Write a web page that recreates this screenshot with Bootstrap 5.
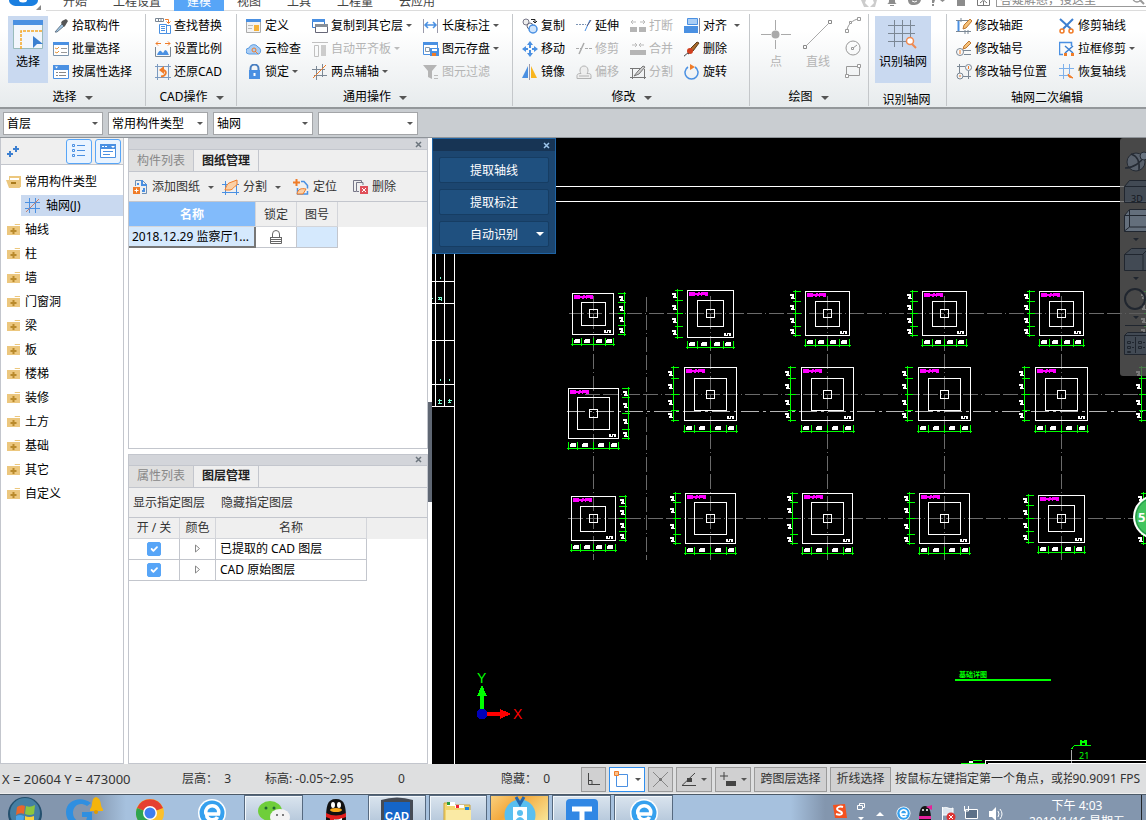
<!DOCTYPE html>
<html lang="zh-CN">
<head>
<meta charset="utf-8">
<meta name="viewport" content="width=device-width, initial-scale=1">
<title>CAD 识别轴网</title>
<link href="https://cdn.jsdelivr.net/npm/bootstrap@5.3.0/dist/css/bootstrap.min.css" rel="stylesheet">
<style>
  :root { --line: #c3c6cd; --blue: #4a90e2; --panel: #efefef; }
  body { font: 12px/16px "Noto Sans", "Noto Sans CJK SC", sans-serif; color: #000; background: #fff; height: 100vh; overflow: hidden; }
  button { font: inherit; color: inherit; background: none; border: 0; padding: 0; white-space: nowrap; }
  a { color: inherit; text-decoration: none; white-space: nowrap; }
  svg { display: block; flex: none; overflow: hidden; }
  label { white-space: nowrap; }

  /* title strip */
  .topstrip { height: 11px; overflow: hidden; background: #fff; }
  .topstrip .edge { border-bottom: 1px solid #dcdcdc; }
  .tab-link { height: 19px; line-height: 20px; padding: 0 13px; color: #444; border-bottom: 1px solid #dcdcdc; }
  .tab-link.on { background: #57a5f7; color: #fff; border-color: #57a5f7; }
  .finder { width: 150px; height: 16px; margin-bottom: 3px; border: 1px solid #999; border-right: 0; font-size: 12px; padding: 0 3px; color: #777; line-height: 12px; }
  .finder::placeholder { color: #888; opacity: 1; }

  /* ribbon */
  .ribbon { height: 98px; background: linear-gradient(#fff 20%, #e7ebed); border-bottom: 2px solid #93979a; }
  .grp { height: 92px; margin-top: 3px; border-right: 1px solid #c4c7ca; padding-left: 9px; flex: none; }
  .grp.w1 { width: 146px; padding-left: 8px; } .grp.w2 { width: 91px; } .grp.w3 { width: 276px; }
  .grp.w4 { width: 237px; } .grp.w5 { width: 119px; padding-left: 7px; } .grp.w6 { width: 78px; padding-left: 6px; }
  .grp-name { height: 22px; line-height: 25px; margin-left: -8px; text-align: center; }
  .grp-name.low { line-height: 27px; }
  .grp-name .caret { border-width: 4px 4px 0; }
  .grp-body { height: 70px; }
  .tool { height: 23px; display: flex; align-items: center; gap: 3px; }
  .tool.off, .off { color: #b4b4b4; }
  .big { height: 67px; margin-top: 2px; display: flex; flex-direction: column; align-items: center; }
  .big.on { background: #c9d9f0; }
  .caret { width: 0; height: 0; border: solid transparent; border-width: 3px 3px 0; border-top-color: #555; margin-left: 5px; display: inline-block; vertical-align: middle; }
  .off .caret { border-top-color: #bbb; }

  /* filter row */
  .filters { height: 29px; background: #c9cdd1; border-bottom: 1px solid #8f9499; padding: 0 3px; gap: 5px; }
  .pick { width: 100px; height: 23px; border: 1px solid #a3a5a8; border-radius: 0; font: inherit; padding: 1px 18px 0 3px; background-position: right 4px center; background-size: 6px 3px; color: #000;
    background-color: #fff; background-image: url("data:image/svg+xml,%3csvg xmlns='http://www.w3.org/2000/svg' viewBox='0 0 6 3'%3e%3cpath d='M0 0h6L3 3z' fill='%23555'/%3e%3c/svg%3e"); }

  /* navigation tree */
  .navtree { width: 124px; border: 1px solid var(--line); border-top: 0; }
  .navtree-head { height: 27px; background: var(--panel); border-bottom: 1px solid var(--line); padding: 0 2px 0 6px; gap: 3px; }
  .tgl { width: 26px; height: 25px; border: 1px solid #57a5f7; border-radius: 3px; background: #eaf4ff; }
  .tree { padding: 5px 0 0; margin: 0; list-style: none; }
  .tree a { display: flex; align-items: center; height: 24px; gap: 4px; padding-left: 5px; }
  .tree a.sel { margin: 1px 0 2px 20px; height: 21px; gap: 6px; padding-left: 4px; background: #c9d9f0; }

  /* dock panels */
  .dock { width: 300px; margin: 0 4px; gap: 5px; }
  .pane { flex: 1 1 0; border: 1px solid var(--line); background: #fff; }
  .pane-top { height: 11px; background: #d3d5da; border-bottom: 1px solid var(--line); padding-right: 5px; }
  .pane-tabs { height: 22px; background: var(--panel); border-bottom: 1px solid var(--line); }
  .pane-tabs button { width: 65px; border-right: 1px solid var(--line); background: #dfdfdf; color: #888; }
  .pane-tabs .on { background: var(--panel); color: #222; font-weight: bold; }
  .pane-tools { height: 30px; background: var(--panel); border-bottom: 1px solid var(--line); padding: 1px 4px 0; color: #333; }
  .pane-tools button { display: flex; align-items: center; gap: 4px; }
  .sheet { table-layout: fixed; border-collapse: separate; border-spacing: 0; }
  .sheet th { font-weight: normal; text-align: center; color: #333; border: solid #d3d5da; border-width: 0 1px 1px 0; padding: 1px 0 0; }
  .sheet td { border: solid var(--line); border-width: 0 1px 1px 0; padding: 0 0 0 4px; height: 21px; line-height: 16px; white-space: nowrap; overflow: hidden; background: #fff; }
  .sheet td.file { background: #d5e9fd; border-right: 2px solid #777; border-bottom: 2px solid #777; padding-left: 3px; }
  .sheet td.pale { background: #d5e9fd; }
  .thead-bg { background: linear-gradient(var(--panel) 25px, #fff 25px); }
  .thead-bg.short { background: linear-gradient(var(--panel) 21px, #fff 21px); }
  .tickbox { width: 14px; height: 14px; margin: 0; display: block; border-radius: 2px !important; }
  .tickbox:checked { background-color: #57a5f7; border-color: #57a5f7; }
  .grip { width: 4px; height: 100px; left: -4px; top: 264px; background: #5f6773; }

  /* drawing area */
  .stage { background: #000; min-width: 0; }
  .float-box { width: 124px; height: 116px; left: 0; top: 0; background: #1c4670; border: 1px solid #1f63a3; }
  .float-top { height: 12px; background: #173454; padding-right: 5px; margin-bottom: 6px; }
  .float-box .act { display: block; position: relative; width: 110px; height: 26px; margin: 0 6px 6px; padding-top: 2px; background: #1f507f; border: 1px solid #163d63; border-radius: 2px; color: #fff; }

  /* status bar */
  .status { height: 30px; background: #dedfe0; color: #333; padding: 1px 6px 0 2px; border-bottom: 1px solid #eee; }
  .status .val { flex: none; white-space: pre; }
  .status .coords { width: 180px; font-size: 13px; }
  .sbtn { height: 25px; border: 1px solid #9a9a9a; background: #d0d0d1; display: flex; align-items: center; justify-content: center; flex: none; color: #333; }
  .sbtn.on { background: #fff; border-color: #2f8fef; }

  /* task bar */
  .taskbar { height: 26px; overflow: hidden; border-top: 1px solid #4c5a68; background: linear-gradient(90deg, #8396ae 8%, #a6c1de 11%, #a6c1de 69%, #8396ae 72%); }
  .task { height: 26px; width: 58px; display: flex; justify-content: center; flex: none; margin-right: 3px; border: 1px solid transparent; border-bottom: 0; }
  .task.wide { width: 59px; }
  .task.open { border-color: #56697f; background: linear-gradient(#dae4ee, #b7c9dc); box-shadow: inset 1px 1px #f2f7fb; }
  .task.alert-on { background: linear-gradient(135deg, #f9cf7c, #f3a83c 40%, #f7e79a); border-color: #56697f; }
  .clock { width: 96px; color: #fff; text-align: center; margin-top: 3px; }
</style>
</head>
<body class="d-flex flex-column">
<svg width="0" height="0" class="position-absolute" aria-hidden="true">
  <symbol id="folder" viewBox="0 0 15 14"><path d="M1 3h7l1-2h5v11H1z" fill="#ecc77e"/><path d="M8 2.500h6" stroke="#fff"/><path d="M7.500 5v6M4.500 8h6" stroke="#b98a2c" stroke-width="2"/></symbol>
  <symbol id="folder-open" viewBox="0 0 15 14"><path d="M3 1h12v11H3z" fill="#ecc77e"/><path d="M4 3h9v2H4z" fill="#fff"/><path d="M0 5h12l2 8H3z" fill="#ecc77e"/><path d="M5 8h5" stroke="#a97a1c" stroke-width="2"/></symbol>
  <symbol id="ie" viewBox="0 0 30 30"><circle cx="15" cy="15" r="14" fill="#fff"/><circle cx="15" cy="15" r="12.500" fill="#35a0ee"/><path d="M9 16a6.500 6.500 0 1 1 12.500 0H9.500c0 7 9 7 11 3" fill="none" stroke="#fff" stroke-width="3.500"/></symbol>
  <symbol id="cross" viewBox="0 0 7 7"><path d="M1 1l5 5M6 1L1 6" stroke="currentColor" stroke-width="1.500"/></symbol>
</svg>

<header class="topstrip d-flex align-items-end flex-shrink-0">
  <svg width="46" height="11"><path d="M9 0h29c0 4-4 6-8 6H17c-4 0-8-2-8-6z" fill="#1a7fe0"/><ellipse cx="23" cy="0" rx="4" ry="2.500" fill="#fff"/><path d="M41 5v5h-5z" fill="#888"/></svg>
  <span class="edge ps-1"></span>
  <nav class="d-flex">
    <a class="tab-link" href="#">开始</a><a class="tab-link" href="#">工程设置</a><a class="tab-link on" href="#">建模</a><a class="tab-link" href="#">视图</a><a class="tab-link" href="#">工具</a><a class="tab-link" href="#">工程量</a><a class="tab-link" href="#">云应用</a>
  </nav>
  <div class="edge d-flex flex-fill justify-content-end align-items-end">
    <svg width="135" height="10" fill="#8c8c8c"><path d="M0 0h5l-1 3 4 4H3zM16 0h-4l1 3-4 4h5z" fill="#ccc"/><path d="M25 4c3 0 3-2 3-4h6c0 2 0 4 3 4zM29 5h4v1h-4z"/><path d="M47 0h13c-1 4-4 5-8 5-3 0-5-2-5-5z"/><path d="M51 1q3 2 5 0" stroke="#fff" fill="none"/><path d="M71 4h2v2h-2zM71 0h3l-1 3h-2zM79 0h5l-2.500 2z"/><path d="M96 0h8v6h-8z"/><path d="M116.500 0v5.500h12V0M122.500 5V1M119 3l3.500-3L126 3" fill="none" stroke="#777"/></svg>
    <div class="position-relative"><input class="finder d-block" type="text" placeholder="答疑解惑，搜这里" aria-label="搜索"><svg class="position-absolute end-0 bottom-0 mb-1" width="14" height="8"><circle cx="5" cy="0" r="4" fill="none" stroke="#999" stroke-width="1.500"/><path d="M8 2l4 4" stroke="#999" stroke-width="2"/></svg></div>
  </div>
</header>

<section class="ribbon d-flex flex-shrink-0">
  <div class="grp w1">
    <div class="grp-body d-flex" style="gap:5px">
      <button class="big on" style="width:40px"><svg width="30" height="30" class="mt-1"><path d="M.5.5h29v28H.5z" fill="#f2f6fc" stroke="#9bb"/><path d="M0 0h30v5H0z" fill="#4a90e2"/><path d="M8 29V11h22" fill="none" stroke="#f5a623" stroke-width="1.500" stroke-dasharray="3 1"/><path d="M20 16v12l4-4h6z" fill="#3b7fd0"/></svg><span class="mt-1">选择</span></button>
      <div>
        <button class="tool"><svg width="16" height="16"><path d="M2 14l7-8 2 2-7 6z" fill="#9fc8e8" stroke="#678"/><path d="M8 5l3 4 1-1 3-5-2-2-4 2z" fill="#555"/></svg>拾取构件</button>
        <button class="tool"><svg width="16" height="16"><path d="M.5 1.500h15v13H.5z" fill="#fff" stroke="#7b94ad"/><path d="M0 1h16v3H0z" fill="#4a90e2"/><path d="M8 7.500h6M8 11.500h6" stroke="#999"/><path d="M2 7l2 1 2-2M2 11l2 1 2-2" fill="none" stroke="#e8963a"/></svg>批量选择</button>
        <button class="tool"><svg width="16" height="16"><path d="M.5 1.500h15v13H.5z" fill="#fff" stroke="#4a90e2"/><path d="M0 1h16v5H0z" fill="#4a90e2"/><path d="M2 2.500h3l-1.500 2z" fill="#fff"/><path d="M3 8.500h2M6 8.500h7M3 11.500h2M6 11.500h7" stroke="#888"/></svg>按属性选择</button>
      </div>
    </div>
    <div class="grp-name">选择 <span class="caret"></span></div>
  </div>

  <div class="grp w2">
    <div class="grp-body">
      <button class="tool"><svg width="16" height="16"><path d="M.5.500h8v3h-8zM3.500.500v3M6 .5v3" fill="none" stroke="#7b8794"/><path d="M10 1.500h3.500V5M11.500 3.500l2 2 2-2" fill="none" stroke="#f07c28"/><path d="M4.500 6.500h7v9h-7zM11.500 7.500h4v8h-4" fill="#fff" stroke="#4a90e2"/><path d="M6 8.500h4M6 10.500h4M6 12.500h4" stroke="#4a90e2"/></svg>查找替换</button>
      <button class="tool"><svg width="16" height="16"><path d="M.5 6v9.500h15V6" fill="none" stroke="#7b8794"/><path d="M2 14c1-3 3-5 4-4l2 2 2-3c2 0 3 3 4 5z" fill="#4a90e2"/><path d="M1 2.500h5M10 2.500h5M3 .5l-2 2 2 2M13 .5l2 2-2 2" fill="none" stroke="#f07c28"/></svg>设置比例</button>
      <button class="tool"><svg width="16" height="16"><path d="M2.500 0v16M13.500 0v16M0 2.500h16M0 13.500h16" stroke="#7b9ac0"/><path d="M6 12.500c6-1 6-6 2-6.500" fill="none" stroke="#f07c28" stroke-width="2"/><path d="M9 2v8L4 6z" fill="#f07c28"/></svg>还原CAD</button>
    </div>
    <div class="grp-name">CAD操作 <span class="caret"></span></div>
  </div>

  <div class="grp w3">
    <div class="grp-body d-flex">
      <div style="width:66px">
        <button class="tool"><svg width="16" height="16"><path d="M.5 1.500h14v13H.5z" fill="#f3f3f3" stroke="#aaa"/><path d="M0 1h15v3H0z" fill="#4a90e2"/><path d="M8 7h5v6H8z" fill="#f5b23a"/><path d="M2 7.500h5M2 10.500h4" stroke="#bbb"/></svg>定义</button>
        <button class="tool"><svg width="16" height="16"><path d="M3 13a3 3 0 0 1 0-6 5 5 0 0 1 9-1 4 4 0 0 1 1 7z" fill="#a9cdf5" stroke="#5b9be0"/><circle cx="8" cy="9" r="2" fill="none" stroke="#f07c28"/><path d="M9 10l3 3" stroke="#f07c28"/></svg>云检查</button>
        <button class="tool"><svg width="16" height="16"><path d="M4.500 7V4.500a4 4 0 0 1 8 0V7" fill="none" stroke="#4a7fc0" stroke-width="2"/><path d="M3 6h11v9H3z" fill="#4a90e2"/><path d="M8.500 9v3" stroke="#fff" stroke-width="2"/></svg>锁定 <span class="caret ms-0"></span></button>
      </div>
      <div style="width:111px">
        <button class="tool"><svg width="16" height="16"><path d="M.5 1.500h12v8H.5z" fill="#fff" stroke="#3c7fd0"/><path d="M0 1h13v3H0z" fill="#4a90e2"/><path d="M3.500 6.500h12v8h-12z" fill="#fff" stroke="#667"/><path d="M3 6h13v3H3z" fill="#888f98"/></svg>复制到其它层<span class="caret ms-0"></span></button>
        <button class="tool off"><svg width="16" height="16"><path d="M0 1.500h16M2.500 4.500h4v11h-4z" fill="none" stroke="#c0c0c0"/><path d="M9 4h5v11H9z" fill="#ccc"/></svg>自动平齐板<span class="caret ms-0"></span></button>
        <button class="tool"><svg width="16" height="16"><path d="M4.500 2v14M10.500 0v13M0 5.500h13M2 11.500h13" stroke="#7b8794"/><path d="M1 14L14 1" stroke="#f07c28"/></svg>两点辅轴<span class="caret ms-0"></span></button>
      </div>
      <div>
        <button class="tool"><svg width="16" height="16"><path d="M.5 1v14M14.500 1v14" stroke="#99a"/><path d="M2 7h11M5 4L2 7l3 3M10 4l3 3-3 3" fill="none" stroke="#4a90e2" stroke-width="1.500"/></svg>长度标注<span class="caret ms-0"></span></button>
        <button class="tool"><svg width="16" height="16"><path d="M.5 1.500h14v12H.5z" fill="#fff" stroke="#4a90e2"/><path d="M0 1h15v3H0z" fill="#4a90e2"/><path d="M2.500 6.500h4v4h-4z" fill="none" stroke="#89a"/><path d="M7 7h9v8H7z" fill="#4a90e2"/><path d="M9 8h5v2H9z" fill="#fff"/><path d="M9 12h4v3H9z" fill="#f07c28"/></svg>图元存盘<span class="caret ms-0"></span></button>
        <button class="tool off"><svg width="16" height="16"><path d="M0 1h14L9 7v8l-4-2V7z" fill="#b5b5b5"/><path d="M11 11.500h4M11 14.500h4" stroke="#bbb"/></svg>图元过滤</button>
      </div>
    </div>
    <div class="grp-name">通用操作 <span class="caret"></span></div>
  </div>

  <div class="grp w4">
    <div class="grp-body d-flex" style="gap:11px">
      <div>
        <button class="tool"><svg width="16" height="16"><circle cx="4" cy="4" r="3" fill="#eee" stroke="#778"/><circle cx="8" cy="8" r="3" fill="none" stroke="#667"/><circle cx="11" cy="11" r="4" fill="#cfe4fb" stroke="#4a90e2" stroke-width="1.500"/><path d="M9 1.500h4V4M11 3l2 2 2-2" fill="none" stroke="#222"/></svg>复制</button>
        <button class="tool"><svg width="16" height="16"><path d="M8 0l3 4H5zM8 16l3-4H5zM0 8l4-3v6zM16 8l-4-3v6zM7 4h2v3H7zM7 9h2v3H7zM4 7h2v2H4zM10 7h2v2h-2z" fill="#4a90e2"/></svg>移动</button>
        <button class="tool"><svg width="16" height="16"><path d="M6 2v12H0z" fill="#4a90e2"/><path d="M9 2v12h6z" fill="#f8b51e"/><path d="M7.500 0v16" stroke="#99a"/></svg>镜像</button>
      </div>
      <div>
        <button class="tool"><svg width="16" height="16"><path d="M0 6.500h10" stroke="#7d95b5" stroke-dasharray="2 1"/><path d="M9 13l5-11" stroke="#4a90e2"/><path d="M11 8l4-6" stroke="#557"/></svg>延伸</button>
        <button class="tool off"><svg width="16" height="16"><path d="M0 7.500h6M9 7.500h7" stroke="#aaa" stroke-dasharray="3 1"/><path d="M3 13L8 2" stroke="#aaa" stroke-width="1.500"/></svg>修剪</button>
        <button class="tool off"><svg width="16" height="16"><path d="M1 14.500v-3c0-2 3-2 4-2C3 7 4 2 8 2s5 5 3 7.500c2 0 4 0 4 2v3zM3 12h10" fill="#eee" stroke="#b2b2b2"/></svg>偏移</button>
      </div>
      <div>
        <button class="tool off"><svg width="16" height="16"><path d="M0 9h7v5H0zM9 9h7v5H9z" fill="#b5b5b5"/><path d="M1 4h5M3 2L1 4l2 2M10 4h5M13 2l2 2-2 2" fill="none" stroke="#bbb"/></svg>打断</button>
        <button class="tool off"><svg width="16" height="16"><path d="M0 9h8v5H0zM8 9h8v5H8z" fill="#b5b5b5"/><path d="M2 4h5M5 2l2 2-2 2M9 4h5M11 2L9 4l2 2" fill="none" stroke="#bbb"/></svg>合并</button>
        <button class="tool off"><svg width="16" height="16"><path d="M0 4.500h11M2.500 4v11M14.500 5v10M0 13.500h16" stroke="#777"/><path d="M4 12l4-5 5-5 2 1-6 7z" fill="#ccc" stroke="#777"/></svg>分割</button>
      </div>
      <div>
        <button class="tool"><svg width="16" height="16"><path d="M3.500.5h10v6h-10z" fill="#a9cdf5" stroke="#4a90e2"/><path d="M0 8h14v7H0z" fill="#4a90e2"/><path d="M15.500 0v16" stroke="#889"/></svg>对齐<span class="caret ms-1"></span></button>
        <button class="tool"><svg width="16" height="16"><path d="M6 8l7-7 2 1-6 8z" fill="#a86a2a" stroke="#5a3a1a"/><circle cx="6" cy="10" r="3" fill="#d04020"/><path d="M0 15c3-1 2-4 5-2" stroke="#333" fill="none"/></svg>删除</button>
        <button class="tool"><svg width="16" height="16"><path d="M11 3a6.500 6.500 0 1 1-7 0" fill="none" stroke="#4a90e2" stroke-width="1.500"/><path d="M6 0l5 3-5 3z" fill="#f07c28"/></svg>旋转</button>
      </div>
    </div>
    <div class="grp-name">修改 <span class="caret"></span></div>
  </div>

  <div class="grp w5">
    <div class="grp-body d-flex off" style="gap:12px">
      <button class="big ps-1"><svg width="30" height="30" class="mt-1"><path d="M0 14.500h10M20 14.500h10M14.500 0v10M14.500 20v9" stroke="#aaa"/><circle cx="14.500" cy="14.500" r="4" fill="#aaa"/></svg><span class="mt-1">点</span></button>
      <button class="big"><svg width="30" height="30" class="mt-1"><path d="M4 25L25 4" stroke="#aaa"/><path d="M.5 25.500h3v3h-3zM25.500.5h3v3h-3z" fill="none" stroke="#888"/></svg><span class="mt-1">直线</span></button>
      <div>
        <button class="tool" aria-label="圆弧"><svg width="17" height="17"><path d="M2 13C3 7 8 3 13 2" fill="none" stroke="#999"/><path d="M.5 12.500h3v3h-3zM12.500.5h3v3h-3zM4.500 4.500h2v2h-2z" fill="#fff" stroke="#999"/></svg></button>
        <button class="tool" aria-label="圆"><svg width="17" height="17"><circle cx="8" cy="8" r="7" fill="none" stroke="#999"/><path d="M8 8l4-3" stroke="#999"/><path d="M6.500 7.500h2v2h-2z" fill="#fff" stroke="#999"/></svg></button>
        <button class="tool" aria-label="矩形"><svg width="17" height="17"><path d="M1.500 3.500h13v9h-13z" fill="none" stroke="#999"/><path d="M.5 11.500h3v3h-3zM12.500 1.500h3v3h-3z" fill="#fff" stroke="#999"/></svg></button>
      </div>
    </div>
    <div class="grp-name">绘图 <span class="caret"></span></div>
  </div>

  <div class="grp w6">
    <div class="grp-body">
      <button class="big on" style="width:56px"><svg width="30" height="30" class="mt-1"><path d="M6.500 0v27M14.500 0v27M22.500 0v19M0 5.500h27M0 13.500h27M0 21.500h18" stroke="#7b8794"/><circle cx="22" cy="21" r="3.500" fill="#fff" stroke="#f08a50" stroke-width="1.500"/><path d="M24 24l4 4" stroke="#f08a50" stroke-width="2"/></svg><span class="mt-1">识别轴网</span></button>
    </div>
    <div class="grp-name low">识别轴网</div>
  </div>

  <div class="grp flex-fill border-0">
    <div class="grp-body d-flex" style="gap:12px">
      <div>
        <button class="tool"><svg width="16" height="16"><path d="M0 2.500h15M0 13.500h15M5 0v4M9 12v4M12 12v4" stroke="#7b8794"/><path d="M2.500 3v10" stroke="#4a90e2" stroke-width="2"/><path d="M7 11l1-4 6-6 2 2-6 7z" fill="#f6c27a" stroke="#c07830"/></svg>修改轴距</button>
        <button class="tool"><svg width="16" height="16"><circle cx="4" cy="11" r="3.500" fill="none" stroke="#7b8794"/><path d="M4 9v4" stroke="#f07c28"/><path d="M8 13.500h7M7 9.500h8" stroke="#7b8794"/><path d="M7 8l1-3 5-5 2 2-5 5z" fill="#f6c27a" stroke="#c07830"/></svg>修改轴号</button>
        <button class="tool"><svg width="16" height="16"><circle cx="4" cy="12" r="3" fill="none" stroke="#7b8794"/><circle cx="12.500" cy="3.500" r="3" fill="none" stroke="#7b8794"/><path d="M1 2.500h8M3.500 0v9M7 12.500h8M12.500 7v8" stroke="#7b8794"/><path d="M4 11v2M12.500 2v3" stroke="#f07c28"/></svg>修改轴号位置</button>
      </div>
      <div>
        <button class="tool"><svg width="16" height="16"><path d="M1 1l11 10M14 1L4 11" stroke="#3c7fd0" stroke-width="2"/><circle cx="3" cy="13" r="2" fill="none" stroke="#f07c28" stroke-width="1.500"/><circle cx="12" cy="13" r="2" fill="none" stroke="#f07c28" stroke-width="1.500"/></svg>修剪轴线</button>
        <button class="tool"><svg width="16" height="16"><path d="M4 13.500H.5V1.500h12V5" fill="none" stroke="#4a90e2" stroke-width="1.500"/><path d="M6 5l8 7M14 5l-8 7" stroke="#3c7fd0" stroke-width="1.500"/><path d="M5 12h3v3H5zM12 12h3v3h-3z" fill="#f07c28"/></svg>拉框修剪<span class="caret ms-0"></span></button>
        <button class="tool"><svg width="16" height="16"><path d="M4.500 0v15M10.500 0v10M0 4.500h15M0 11.500h9" stroke="#7db0ea"/><path d="M9 10l5 4-4-1z" fill="#f07c28" stroke="#f07c28"/></svg>恢复轴线</button>
      </div>
    </div>
    <div class="grp-name low">轴网二次编辑</div>
  </div>
</section>

<div class="filters d-flex align-items-center flex-shrink-0">
  <select class="form-select pick" aria-label="楼层"><option>首层</option></select>
  <select class="form-select pick" aria-label="构件大类"><option>常用构件类型</option></select>
  <select class="form-select pick" aria-label="构件类型"><option>轴网</option></select>
  <select class="form-select pick" aria-label="构件"><option></option></select>
</div>

<main class="d-flex flex-fill" style="min-height:0">
  <aside class="navtree flex-shrink-0">
    <div class="navtree-head d-flex align-items-center">
      <button class="me-auto" aria-label="展开"><svg width="13" height="13"><path d="M9 1v6M6 4h6M3 6v6M0 9h6" stroke="#3c7fd0" stroke-width="2"/></svg></button>
      <button class="tgl d-flex align-items-center justify-content-center" aria-label="列表"><svg width="14" height="14"><path d="M.5.5h2v2h-2zM.5 5.500h2v2h-2zM.5 10.500h2v2h-2z" fill="none" stroke="#4a90e2"/><path d="M5 1.500h8M5 6.500h8M5 11.500h8" stroke="#4a90e2"/></svg></button>
      <button class="tgl d-flex align-items-center justify-content-center" aria-label="面板"><svg width="16" height="14"><path d="M.5.500h15v13H.5z" fill="#fff" stroke="#4a90e2"/><path d="M0 0h16v5H0z" fill="#4a90e2"/><path d="M2 2.500h6" stroke="#fff" stroke-dasharray="2 1"/><path d="M11 2h4l-2 2z" fill="#fff"/><path d="M3 7.500h10M3 10.500h7" stroke="#4a90e2"/></svg></button>
    </div>
    <ul class="tree" id="tree">
      <li><a href="#"><svg width="15" height="14"><use href="#folder-open"/></svg>常用构件类型</a></li>
      <li><a href="#" class="sel"><svg width="15" height="15"><path d="M4.500 0v15M10.500 0v15M0 4.500h15M0 10.500h15" stroke="#4a90e2"/><path d="M1 14L14 1" stroke="#c08070"/></svg>轴网(J)</a></li>
    </ul>
  </aside>

  <div class="dock d-flex flex-column flex-shrink-0">
    <section class="pane">
      <div class="pane-top d-flex justify-content-end align-items-center"><button aria-label="关闭" class="text-secondary"><svg width="7" height="7"><use href="#cross"/></svg></button></div>
      <div class="pane-tabs d-flex"><button>构件列表</button><button class="on">图纸管理</button></div>
      <div class="pane-tools d-flex align-items-center">
        <button><svg width="15" height="16"><path d="M2.500 7V1.500h7l4 4v9H9" fill="none" stroke="#6d8fb5"/><path d="M9 1v5h5M5 4v2M11 9v3H9" fill="none" stroke="#4a90e2" stroke-width="2"/><path d="M0 8h7v7H0z" fill="#f07c28"/><path d="M3.500 9.500v4M1.500 11.500h4" stroke="#fff"/></svg>添加图纸<span class="caret ms-1"></span></button>
        <button class="ms-2"><svg width="17" height="16"><path d="M0 5.500h17M0 13.500h17M3.500 2v14M14.500 2v14" stroke="#4a90e2"/><path d="M3 11c1-3 2-6 4-7l8-3v5c-3 1-4 5-7 5z" fill="#fbd0a6" stroke="#f07c28"/></svg>分割<span class="caret ms-1"></span></button>
        <button class="ms-2 ps-1"><svg width="16" height="16"><path d="M8 2.500h3l3.500 4v3M4.500 9v6h10v-3" fill="none" stroke="#4a90e2" stroke-width="1.500"/><path d="M4 15c1-5 4-6 9-5l-3 5z" fill="#fbd0a6" stroke="#f07c28"/><path d="M3.500 0v7M0 3.500h7" stroke="#f07c28" stroke-width="2"/></svg>定位</button>
        <button class="ms-3"><svg width="15" height="16"><path d="M3 12.500H.5V1.500h8V3M10 6V3.500H3.500v9H6" fill="none" stroke="#778"/><path d="M7 7h8v8H7z" fill="#e0505a"/><path d="M9 9l4 4M13 9l-4 4" stroke="#fff"/></svg>删除</button>
      </div>
      <div class="thead-bg">
        <table class="sheet">
          <colgroup><col style="width:127px"><col style="width:41px"><col style="width:41px"></colgroup>
          <thead><tr style="height:25px"><th class="fw-bold text-white" style="background:#82bbfb">名称</th><th>锁定</th><th>图号</th></tr></thead>
          <tbody><tr><td class="file">2018.12.29 监察厅1...</td><td class="p-0"><svg class="mx-auto" width="12" height="14"><path d="M2.500 7V4a3.500 3.500 0 0 1 7 0v3M1 7.500h10M1 9.500h10M1 11.500h10M.5 7v6.500h11V7" fill="none" stroke="#666"/></svg></td><td class="pale"></td></tr></tbody>
        </table>
      </div>
    </section>
    <section class="pane">
      <div class="pane-top d-flex justify-content-end align-items-center"><button aria-label="关闭" class="text-secondary"><svg width="7" height="7"><use href="#cross"/></svg></button></div>
      <div class="pane-tabs d-flex"><button>属性列表</button><button class="on">图层管理</button></div>
      <div class="pane-tools d-flex align-items-center"><button class="me-3">显示指定图层</button><button>隐藏指定图层</button></div>
      <div class="thead-bg short">
        <table class="sheet">
          <colgroup><col style="width:51px"><col style="width:36px"><col style="width:151px"></colgroup>
          <thead><tr style="height:21px"><th>开 / 关</th><th>颜色</th><th>名称</th></tr></thead>
          <tbody>
            <tr><td class="p-0"><input class="form-check-input tickbox mx-auto" type="checkbox" checked aria-label="已提取的 CAD 图层"></td><td class="p-0"><svg class="mx-auto" width="7" height="9"><path d="M1.500 1v7l4-3.500z" fill="none" stroke="#888"/></svg></td><td>已提取的 CAD 图层</td></tr>
            <tr><td class="p-0"><input class="form-check-input tickbox mx-auto" type="checkbox" checked aria-label="CAD 原始图层"></td><td class="p-0"><svg class="mx-auto" width="7" height="9"><path d="M1.500 1v7l4-3.500z" fill="none" stroke="#888"/></svg></td><td>CAD 原始图层</td></tr>
          </tbody>
        </table>
      </div>
    </section>
  </div>

  <div class="stage flex-fill position-relative">
    <svg id="cad" width="100%" height="100%" class="position-absolute" shape-rendering="crispEdges" fill="none"></svg>
    <span class="grip position-absolute"></span>
    <div class="float-box position-absolute">
      <div class="float-top d-flex justify-content-end align-items-center"><button aria-label="关闭" style="color:#9cc4ea"><svg width="7" height="7"><use href="#cross"/></svg></button></div>
      <button class="act">提取轴线</button>
      <button class="act">提取标注</button>
      <button class="act">自动识别<svg class="position-absolute end-0 top-50 translate-middle-y me-1" width="8" height="4"><path d="M0 0h8L4 4z" fill="#fff"/></svg></button>
    </div>
  </div>
</main>

<footer class="status d-flex align-items-center flex-shrink-0">
  <span class="val coords">X = 20604 Y = 473000</span>
  <span class="val" style="width:83px">层高：  3</span>
  <span class="val" style="width:133px">标高: -0.05~2.95</span>
  <span class="val" style="width:103px">0</span>
  <span class="val" style="width:80px">隐藏：  0</span>
  <div class="d-flex flex-shrink-0" style="gap:3px">
    <button class="sbtn" style="width:25px" aria-label="正交"><svg width="13" height="13"><path d="M1.500 0v11.500H13M1 7.500h4v4" fill="none" stroke="#444"/></svg></button>
    <button class="sbtn on" style="width:36px" aria-label="捕捉"><svg width="16" height="17"><path d="M2.500 3.500h11v12h-11z" fill="none" stroke="#4a90e2"/><path d="M.5.5h4v4h-4z" fill="#fbc08a" stroke="#f07c28"/></svg><span class="caret"></span></button>
    <button class="sbtn" style="width:25px" aria-label="交点"><svg width="15" height="15"><path d="M0 0l15 15M15 0L0 15" stroke="#888"/><path d="M6 6h3v3H6z" fill="#777"/></svg></button>
    <button class="sbtn" style="width:36px" aria-label="垂点"><svg width="15" height="15"><path d="M14 1L1 13.500h14" fill="none" stroke="#444"/><path d="M6 6h5v4H6z" fill="#444"/></svg><span class="caret"></span></button>
    <button class="sbtn" style="width:36px" aria-label="偏移输入"><svg width="16" height="15"><path d="M4 0v8M0 4h8" stroke="#444"/><path d="M6 9h10v5H6z" fill="#444"/></svg><span class="caret"></span></button>
    <button class="sbtn" style="width:73px">跨图层选择</button>
    <button class="sbtn" style="width:61px">折线选择</button>
  </div>
  <span class="text-nowrap overflow-hidden flex-fill ms-1" style="width:0">按鼠标左键指定第一个角点，或拾</span>
  <span class="val">90.9091 FPS</span>
</footer>

<div class="taskbar d-flex flex-shrink-0">
  <button class="task" style="width:50px" aria-label="开始"><svg width="36" height="30"><circle cx="18" cy="18" r="17" fill="#24506e"/><circle cx="18" cy="17" r="15" fill="#457fa3"/><path d="M10 11q4-3 8-1l-1 8q-4-2-8 1z" fill="#e8662c"/><path d="M19 10q4 2 9-1l-1 9q-4 2-9 0z" fill="#8cc63f"/><path d="M9 20q4-2 8 0l-1 8H9z" fill="#4aa3e8"/><path d="M18 20q4 2 9 0v9h-9z" fill="#fbd03b"/></svg></button>
  <button class="task" style="width:64px" aria-label="浏览器"><svg width="40" height="30"><path d="M26 7l-4 3C14 5 8 10 8 17s8 12 13 8l1-4h-5v-5h10v11C14 36 1 28 1 16 1 5 15-1 26 7z" fill="#2f8fe0"/><path d="M25 13c3-2 1-8 4-11l2-1 2 1c4 3 2 9 5 11v2H25z" fill="#f5b40a"/><circle cx="31" cy="16" r="2" fill="#e09a00"/></svg></button>
  <button class="task wide" aria-label="Chrome"><svg width="28" height="28"><circle cx="14" cy="17" r="14" fill="#fbc02d"/><path d="M14 17L1 12a14 14 0 0 1 26 0z" fill="#e53f32"/><path d="M14 17L1 12a14 14 0 0 0 10 19z" fill="#2ea44f"/><circle cx="14" cy="17" r="7" fill="#fff"/><circle cx="14" cy="17" r="5.500" fill="#3f7ef0"/></svg></button>
  <button class="task wide" aria-label="IE"><svg width="30" height="30"><use href="#ie" y="2" width="30" height="30"/></svg></button>
  <button class="task wide open" aria-label="微信"><svg width="34" height="28"><ellipse cx="13" cy="15" rx="12" ry="10" fill="#6fce3a"/><circle cx="9" cy="12" r="1.500" fill="#263"/><circle cx="17" cy="12" r="1.500" fill="#263"/><ellipse cx="23" cy="21" rx="10" ry="8" fill="#f3f3f3"/><circle cx="20" cy="19" r="1" fill="#555"/><circle cx="26" cy="19" r="1" fill="#555"/></svg></button>
  <button class="task wide" aria-label="QQ"><svg width="30" height="28"><path d="M5 28C5 12 5 3 15 3s10 9 10 25z" fill="#111"/><ellipse cx="12" cy="9" rx="2" ry="3" fill="#fff"/><ellipse cx="18" cy="9" rx="2" ry="3" fill="#fff"/><ellipse cx="15" cy="14" rx="6" ry="2" fill="#f9a81a"/><path d="M5 17q10 5 20 0v4q-10 5-20 0z" fill="#e21d1d"/><path d="M9 22q6 3 12 0v6H9z" fill="#fff"/><path d="M9 20h4v7H9z" fill="#e21d1d"/></svg></button>
  <button class="task open" aria-label="CAD"><svg width="32" height="28"><path d="M0 4q16-5 32 0v24H0z" fill="#454b55"/><path d="M3 6h26v22H3z" fill="#1565c8"/><text x="16" y="24" text-anchor="middle" font-size="11" fill="#fff" font-weight="bold" font-family="Liberation Sans, sans-serif">CAD</text></svg></button>
  <button class="task open" aria-label="资源管理器"><svg width="32" height="28"><path d="M2 28V7h9l2 2h15v19z" fill="#f2d56e" stroke="#c9a13a"/><path d="M5 6h8v4H5zM13 9h9v3h-9z" fill="#fff"/><path d="M5 6h3v3H5z" fill="#2a9d3a"/><path d="M14 9h3v3h-3z" fill="#e23"/><path d="M23 11h4v3h-4z" fill="#28d"/><path d="M4 14h25v14H4z" fill="#faeaa4"/></svg></button>
  <button class="task wide alert-on" aria-label="名片"><svg width="32" height="28"><circle cx="16" cy="19" r="15.500" fill="#59bff0"/><path d="M12 1l4 7 4-7" stroke="#2468b0" stroke-width="3" fill="none"/><path d="M9 11h14v16H9z" fill="#fff"/><circle cx="16" cy="17" r="3" fill="#59bff0"/><path d="M11 25q5-8 10 0z" fill="#59bff0"/></svg></button>
  <button class="task wide open" aria-label="T"><svg width="32" height="28"><rect y="3" width="32" height="32" rx="4" fill="#3187e4"/><path d="M6 13h20M16 13v14" stroke="#fff" stroke-width="5"/></svg></button>
  <button class="task wide open" aria-label="IE 窗口"><svg width="30" height="30"><use href="#ie" y="2" width="30" height="30"/></svg></button>
  <div class="ms-auto d-flex align-items-start flex-shrink-0 pt-2">
    <svg width="180" height="18"><path d="M0 2l12-1 2 14H2z" fill="#f4511e"/><path d="M10 4c-3-1-6 0-6 2s5 2 5 4-3 2-6 1" fill="none" stroke="#fff" stroke-width="2"/><path d="M24.500 2.500h5v4h-5zM26.500 2V.5h5v4H30" fill="none" stroke="#fff"/><path d="M25 14h6l-3 3zM43 13h8l-4-4z" fill="#fff"/><use href="#ie" x="63" y="3" width="15" height="15"/><path d="M86 17c0-10 2-14 6-14s6 4 6 14z" fill="#151515"/><path d="M86 13h12v3H86zM93 4l6-2v5z" fill="#e8209a"/><circle cx="90" cy="7" r="1" fill="#fff"/><circle cx="94" cy="7" r="1" fill="#fff"/><path d="M109.500 4v14M110 5c4-2 6 2 10 0v7h-10" fill="#dde6ef" stroke="#fff"/><circle cx="118" cy="14" r="4.500" fill="#d33"/><path d="M116 12l4 4M120 12l-4 4" stroke="#fff"/><path d="M132.500 6.500h12v9h-12z" fill="#5c7088" stroke="#fff"/><path d="M131.500 3v5h4V3" fill="none" stroke="#fff"/><path d="M156 8h3l4-4v14l-4-4h-3z" fill="#fff"/><path d="M165 8q2 3 0 6M167 6q4 5 0 10" fill="none" stroke="#fff"/></svg>
  </div>
  <div class="clock flex-shrink-0 ms-3"><div>下午 4:03</div><div class="text-nowrap">2019/1/16 星期五</div></div>
  <span class="border-start border-dark flex-shrink-0 ms-3 ps-1"></span>
</div>

<script src="https://cdn.jsdelivr.net/npm/bootstrap@5.3.0/dist/js/bootstrap.bundle.min.js"></script>
<script>
  // Component categories of the tree
  document.getElementById('tree').insertAdjacentHTML('beforeend',
    ['轴线', '柱', '墙', '门窗洞', '梁', '板', '楼梯', '装修', '土方', '基础', '其它', '自定义']
      .map(t => `<li><a href="#"><svg width="15" height="14"><use href="#folder"/></svg>${t}</a></li>`).join(''));

  // Drawing: model coordinates, shifted into the view by one group transform
  const out = [];
  const path = (d, c, x = '') => out.push(`<path d="${d}" stroke="${c}" ${x}/>`);
  const box = (x1, y1, x2, y2) => `M${x1 + .5} ${y1 + .5}H${x2 + .5}V${y2 + .5}H${x1 + .5}z`;
  const GREEN = '#00ff00';

  // grid axes
  const dash = 'stroke-dasharray="15 3 15 3 1 3"';
  path('M569 313.5H1146M585 394.500H1146M568 518.500H1146', '#6a6a6a', dash);
  path('M593.500 296V560M646.500 297V560M710.500 296V560M827.500 296V560M944.500 296V560M1061.500 296V560', '#6a6a6a', dash);
  path('M567 411.500H1146', '#b5b5b5', 'stroke-dasharray="18 4 3 4"');

  // sheet frame and title table
  path('M555 186.500H1146M555 201.500H1146M454.500 254V764M435.500 254V406M444.500 254V406M432 281.500H454M432 303.500H454M432 340.500H454M432 384.500H454M432 406.500H454', '#fff');
  path('M438 297.500h4M438 299.500h3M439.500 297v3M441.500 298v3M432 298.500h1M438 400.500h4M438 403.500h4M439.500 399v5M448 400.500h4M448 402.500h3M449.500 399v4M440.500 277v2M440.500 379v2M449.500 379v2', '#7fffd4');

  // one footing: outer box, middle box, column, and the two dimension chains
  function footing(o, m, cx, cy, side, bottom) {
    path(box(...o) + box(...m) + box(cx - 4, cy - 4, cx + 4, cy + 4), '#fff');
    const dir = side > cx ? 1 : -1, ys = [o[1], m[1], cy, m[3], o[3]], xs = [o[0], m[0], cx, m[2], o[2]];
    let d = `M${side + .5} ${o[1] - 1}V${o[3] + 2}`;
    ys.forEach(y => d += `M${side + 2 * dir} ${y + .5}${dir > 0 ? 'h-8' : 'h8'}`);
    d += `M${o[0] - 1} ${bottom + .5}H${o[2] + 2}`;
    xs.forEach(x => d += `M${x + .5} ${bottom - 6}v8`);
    path(d, GREEN);
    let w = '';
    for (let i = 0; i < 4; i++) {
      const y = Math.round((ys[i] + ys[i + 1]) / 2), x = Math.round((xs[i] + xs[i + 1]) / 2);
      w += `M${side - 5} ${y - 2}h4v4h1v1h-4v-2h1v-1h-2z`;
      w += `M${x - 2} ${bottom - 5}h5v4h-6v-3h1z`;
    }
    w += `M${o[2] - 9} ${o[3] - 4}h2v2h1v-2h2v1h-1v2h-4zM${o[2] - 4} ${o[3] - 4}h2v3h-2z`;
    out.push(`<path d="${w}" fill="#fff"/>`);
    out.push(`<path d="M${o[0] + 2} ${o[1] + 2}h6v1h3v-1h2v1h1v-1h7v4h-3v-1h-3v1h-1v-1h-2v1h-2v-1h-2v1h-6z" fill="#ff00ff"/>`);
  }
  footing([572, 293, 613, 334], [581, 302, 605, 325], 593, 313, 624, 344);
  footing([687, 290, 733, 337], [697, 300, 723, 326], 710, 313, 677, 347);
  footing([568, 388, 618, 438], [577, 397, 609, 429], 593, 413, 628, 448);
  footing([571, 496, 615, 540], [580, 506, 605, 531], 593, 518, 625, 550);
  footing([1038, 495, 1084, 542], [1048, 505, 1074, 531], 1061, 518, 1028, 552);
  for (const k of [0, 117, 234, 351])
    footing([805 + k, 291, 849 + k, 335], [815 + k, 301, 839 + k, 326], 827 + k, 313, 795 + k, 345);
  for (const k of [0, 117, 234, 351, 468])
    footing([684 + k, 367, 736 + k, 420], [694 + k, 378, 726 + k, 410], 710 + k, 394, 673 + k, 431);
  for (const k of [0, 117, 234, 468])
    footing([685 + k, 493, 735 + k, 543], [694 + k, 502, 726 + k, 534], 710 + k, 518, 675 + k, 553);

  // drawing title and the detail at the lower edge
  out.push(`<text x="959" y="677" font-size="7" font-weight="bold" fill="${GREEN}">基础详图</text>`);
  path('M955 680H1051', GREEN, 'stroke-width="2"');
  path('M1071.500 750V763', '#aaa');
  path('M1071.500 749l3-3.500H1091M961 763.500H985M973 760.500H982', GREEN);
  path('M985.500 764V760.500H1146M988 763.500H1146', '#fff');
  out.push('<path d="M969 761h4v2h-4z" fill="#fff"/>');
  out.push(`<path d="M1080 745v-5h2v1h2v-1h3v5h-2v-2h-3v2z" fill="${GREEN}"/><text x="1079" y="759" font-size="9" fill="${GREEN}">21</text>`);

  // coordinate axes
  out.push('<g font-size="14" font-family="Liberation Sans, sans-serif"><text x="477" y="683" fill="#00ff00">Y</text><text x="513" y="719" fill="#f00">X</text></g>');
  out.push('<path d="M480 712V696h-3l5-11 5 11h-3v16z" fill="#00ff00"/><path d="M486 712h14v-3l11 5-11 5v-3h-14z" fill="#f00"/><circle cx="482" cy="714" r="5.500" fill="#0000b8"/>');

  // view navigation pad
  out.push(`<g shape-rendering="auto"><rect x="1120" y="138" width="40" height="238" rx="3" fill="#5a5a5a" fill-opacity=".8"/>
    <circle cx="1136" cy="162" r="9" fill="#59616c" stroke="#252b34"/><path d="M1125 168c8 0 16-5 20-13M1131 154c6 2 9 8 8 16" stroke="#252b34" stroke-width="1.500"/><circle cx="1144" cy="156" r="4" fill="#687380" stroke="#252b34"/>
    <g stroke="#20262f" fill="#414b57" fill-opacity=".8"><path d="M1124.500 186.500l5-6H1150v22h-25.500zM1124.500 186.500H1150"/>
    <path d="M1124.500 215.500l5-6H1150v22h-25.500z" fill="#6b7989"/><path d="M1124.500 215.500H1150M1129.500 210v17H1150M1129.500 227l-5 4" fill="none"/>
    <path d="M1124.500 254.500l7-6H1150v22h-25.500zM1124.500 254.500H1143V270M1143 254l6-6"/>
    <circle cx="1135" cy="299" r="10" fill="none" stroke-width="2"/><path d="M1125 325.500H1146"/><path d="M1124.500 335.500l3-3H1150v22h-25.500zM1124.500 335.500H1150"/></g>
    <path d="M1127.500 341.500h3v2h-3zM1127.500 346.500h3v2h-3zM1127.500 351.500h3v1h-3zM1138.500 341.500h3v2h-3zM1138.500 346.500h3v2h-3zM1132 342.500h2M1132 347.500h2M1143 342.500h2M1143 347.500h2M1135.500 337v16" stroke="#20262f"/>
    <path d="M1133 238h6l-3 3zM1133 277h6l-3 3zM1133 316h6l-3 3z" fill="#20262f"/><text x="1131" y="202" font-size="9" fill="#14181f">3D</text>
    <circle cx="1155" cy="517" r="21" fill="#42c45e" stroke="#fff" stroke-width="2"/><circle cx="1155" cy="517" r="19" stroke="#1f8a4a"/><text x="1138" y="522" font-size="13" font-weight="bold" fill="#fff">5</text></g>`);
  document.getElementById('cad').innerHTML = `<g transform="translate(-432 -138)">${out.join('')}</g>`;
</script>
</body>
</html>
